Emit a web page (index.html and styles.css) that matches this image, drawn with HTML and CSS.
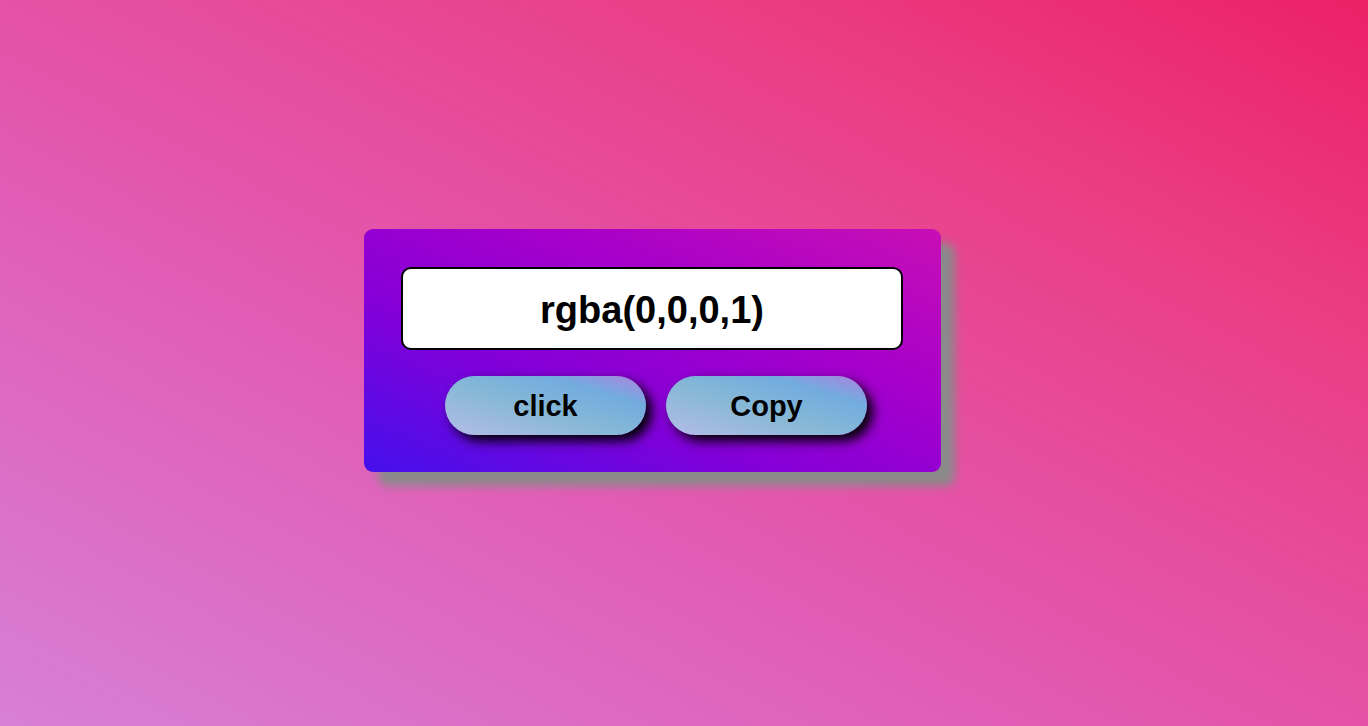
FILE: index.html
```html
<!DOCTYPE html>
<html lang="en">
<head>
<meta charset="UTF-8">
<title>Color generator</title>
<link rel="stylesheet" href="styles.css">
</head>
<body>
  <div class="card">
    <div class="display">rgba(0,0,0,1)</div>
    <div class="actions">
      <button class="btn">click</button>
      <button class="btn">Copy</button>
    </div>
  </div>
</body>
</html>
```
FILE: styles.css
```css
html, body {
  margin: 0;
  height: 100%;
}
body {
  font-family: "Liberation Sans", Arial, sans-serif;
  background: linear-gradient(to top right, #d77fd6 0%, #e25ab2 40%, #ea3f86 75%, #ec2166 100%);
  display: flex;
  align-items: center;
  justify-content: center;
  padding-right: 63px;
  box-sizing: border-box;
}
.card {
  width: 577px;
  height: 243px;
  margin-bottom: 26px;
  box-sizing: border-box;
  padding: 38px 38px 0 37px;
  border-radius: 9px;
  background: linear-gradient(to top right, #4410ec 0%, #8300d8 35%, #a600cb 65%, #c80fb4 100%);
  box-shadow: 14px 14px 10px #8a8a8a;
  display: flex;
  flex-direction: column;
  gap: 26px;
}
.display {
  height: 83px;
  box-sizing: border-box;
  padding-top: 4px;
  border: 2px solid #000;
  border-radius: 10px;
  background: #fff;
  display: flex;
  align-items: center;
  justify-content: center;
  font-weight: bold;
  font-size: 38px;
  color: #000;
}
.actions {
  display: flex;
  justify-content: center;
  gap: 20px;
  padding-left: 8px;
}
.btn {
  width: 201px;
  height: 59px;
  border: none;
  border-radius: 30px;
  background: linear-gradient(to top right, #b4bce6 0%, #86b8d6 45%, #72acdf 75%, #ae82de 100%);
  box-shadow: 6px 6px 12px #000;
  font-family: "Liberation Sans", Arial, sans-serif;
  font-weight: bold;
  font-size: 29px;
  color: #000;
  padding: 2px 0 0;
}
```
